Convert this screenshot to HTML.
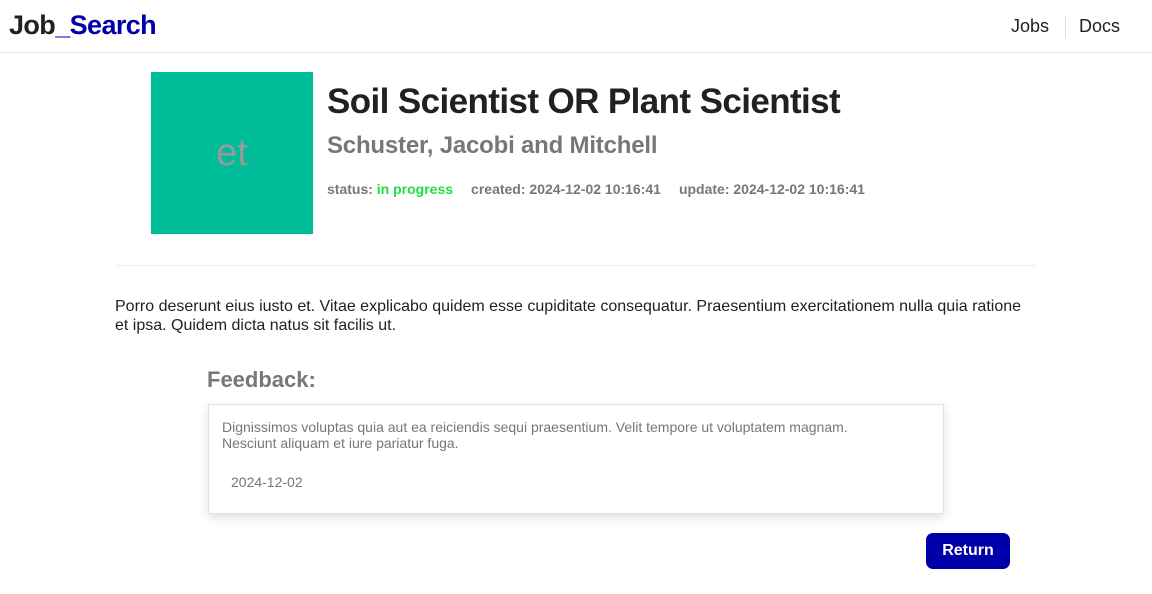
<!DOCTYPE html>
<html><head><meta charset="utf-8"><style>
*{margin:0;padding:0;box-sizing:border-box}
body{width:1152px;height:594px;background:#fff;font-family:"Liberation Sans",sans-serif;color:#212121;position:relative;overflow:hidden}
.a{position:absolute;white-space:nowrap}
</style></head><body>
<div class="a" style="left:9px;top:10px;font-size:27px;font-weight:bold;letter-spacing:-0.6px">Job<span style="color:#0000aa">_Search</span></div>
<div class="a" style="left:1011px;top:16px;font-size:18px">Jobs</div>
<div class="a" style="left:1065px;top:16px;width:1px;height:22px;background:#ddd"></div>
<div class="a" style="left:1079px;top:16px;font-size:18px">Docs</div>
<div class="a" style="left:0;top:52px;width:1152px;height:1px;background:#e5e5e5"></div>
<div class="a" style="left:151px;top:72px;width:162px;height:162px;background:#00bd9a;color:#999;font-size:38px;text-align:center;line-height:162px">et</div>
<div class="a" style="left:327px;top:82px;font-size:35px;font-weight:bold;letter-spacing:-0.6px">Soil Scientist OR Plant Scientist</div>
<div class="a" style="left:327px;top:132px;font-size:24px;font-weight:bold;color:#777;letter-spacing:-0.2px">Schuster, Jacobi and Mitchell</div>
<div class="a" style="left:327px;top:181px;font-size:14px;font-weight:bold;color:#777">status: <span style="color:#22dd44">in progress</span><span style="margin-left:18px">created: 2024-12-02 10:16:41</span><span style="margin-left:18px">update: 2024-12-02 10:16:41</span></div>
<div class="a" style="left:115px;top:265px;width:922px;height:1px;background:#eee"></div>
<div class="a" style="left:115px;top:297px;width:915px;white-space:normal;font-size:16px;line-height:19px">Porro deserunt eius iusto et. Vitae explicabo quidem esse cupiditate consequatur. Praesentium exercitationem nulla quia ratione et ipsa. Quidem dicta natus sit facilis ut.</div>
<div class="a" style="left:207px;top:367px;font-size:22px;font-weight:bold;color:#777">Feedback:</div>
<div class="a" style="left:208px;top:404px;width:736px;height:110px;border:1px solid #e0e0e0;box-shadow:0 4px 10px rgba(0,0,0,0.12)"></div>
<div class="a" style="left:222px;top:419px;width:675px;white-space:normal;font-size:14px;line-height:16px;color:#777">Dignissimos voluptas quia aut ea reiciendis sequi praesentium. Velit tempore ut voluptatem magnam. Nesciunt aliquam et iure pariatur fuga.</div>
<div class="a" style="left:231px;top:474px;font-size:14px;color:#777">2024-12-02</div>
<div class="a" style="left:926px;top:533px;width:84px;height:36px;background:#0000aa;border-radius:7px;color:#fff;font-size:16px;font-weight:bold;text-align:center;line-height:36px">Return</div>
</body></html>
